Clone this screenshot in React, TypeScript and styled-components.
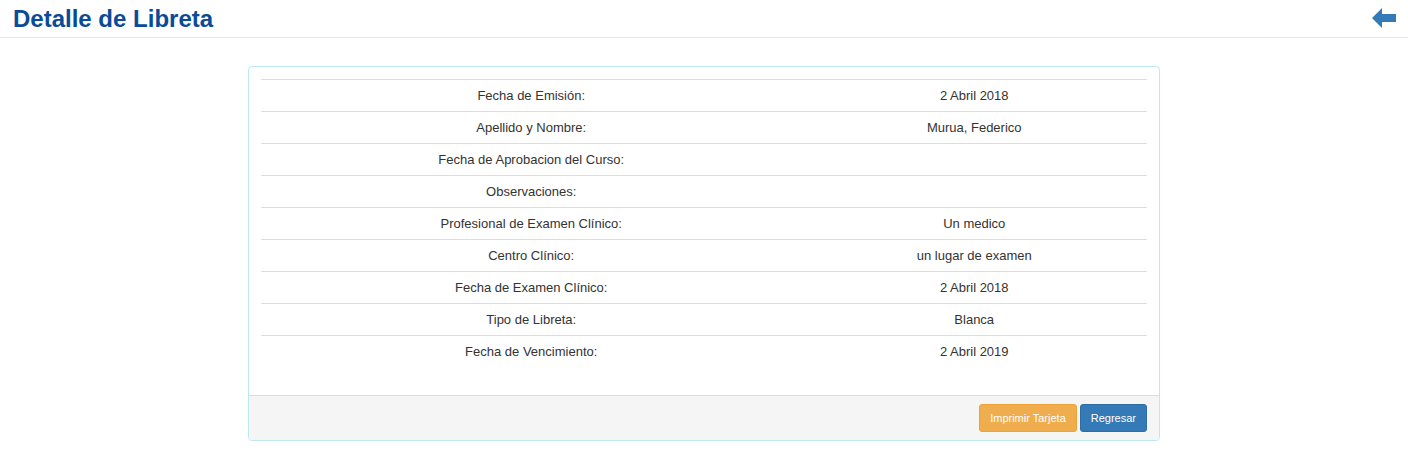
import styled, { createGlobalStyle } from 'styled-components';

const rows: [string, string][] = [
  ['Fecha de Emisión:', '2 Abril 2018'],
  ['Apellido y Nombre:', 'Murua, Federico'],
  ['Fecha de Aprobacion del Curso:', ''],
  ['Observaciones:', ''],
  ['Profesional de Examen Clínico:', 'Un medico'],
  ['Centro Clínico:', 'un lugar de examen'],
  ['Fecha de Examen Clínico:', '2 Abril 2018'],
  ['Tipo de Libreta:', 'Blanca'],
  ['Fecha de Vencimiento:', '2 Abril 2019'],
];

export default function App() {
  return (
    <>
      <GlobalStyle />
      <Header>
        <Title>Detalle de Libreta</Title>
        <BackLink href="#" aria-label="Regresar">
          <svg width="24" height="20" viewBox="0 0 24 20">
            <path d="M0 10 L10 0 L10 6 L24 6 L24 14 L10 14 L10 20 Z" fill="#337ab7" />
          </svg>
        </BackLink>
      </Header>

      <Panel>
        <PanelBody>
          <Table>
            <tbody>
              {rows.map(([label, value]) => (
                <tr key={label}>
                  <LabelCell>{label}</LabelCell>
                  <ValueCell>{value}</ValueCell>
                </tr>
              ))}
            </tbody>
          </Table>
        </PanelBody>
        <PanelFooter>
          <Button $variant="warning">Imprimir Tarjeta</Button>
          <Button $variant="primary">Regresar</Button>
        </PanelFooter>
      </Panel>
    </>
  );
}

const GlobalStyle = createGlobalStyle`
  body {
    margin: 0;
    background: #fff;
    font-family: "Liberation Sans", Arial, sans-serif;
    font-size: 13px;
    color: #333;
  }
`;

const Header = styled.div`
  display: flex;
  align-items: center;
  justify-content: space-between;
  height: 37px;
  padding: 0 12px 0 13px;
  border-bottom: 1px solid #e5e5e5;
`;

const Title = styled.h1`
  margin: 0;
  font-size: 24px;
  font-weight: bold;
  color: #0a4b97;
  line-height: 36px;
`;

const BackLink = styled.a`
  display: flex;
  align-items: center;
  margin-top: -2px;
`;

const Panel = styled.div`
  width: 910px;
  margin: 28px auto 0;
  border: 1px solid #bce8f1;
  border-radius: 4px;
  box-shadow: 0 1px 1px rgba(0, 0, 0, 0.05);
`;

const PanelBody = styled.div`
  padding: 12px 12px 28px;
`;

const Table = styled.table`
  width: 100%;
  border-collapse: collapse;
`;

const Cell = styled.td`
  border-top: 1px solid #ddd;
  padding: 6px 8px;
  line-height: 19px;
  height: 19px;
  text-align: center;
`;

const LabelCell = styled(Cell)`
  width: 61%;
`;

const ValueCell = styled(Cell)``;

const PanelFooter = styled.div`
  display: flex;
  justify-content: flex-end;
  gap: 3px;
  padding: 8px 12px 8px;
  background: #f5f5f5;
  border-top: 1px solid #ddd;
  border-radius: 0 0 3px 3px;
`;

const Button = styled.button<{ $variant: 'warning' | 'primary' }>`
  height: 28px;
  padding: 0 10px;
  font-family: inherit;
  font-size: 11px;
  color: #fff;
  border-radius: 3px;
  border: 1px solid ${(p) => (p.$variant === 'warning' ? '#eea236' : '#2e6da4')};
  background: ${(p) => (p.$variant === 'warning' ? '#f0ad4e' : '#337ab7')};
  cursor: pointer;
`;
